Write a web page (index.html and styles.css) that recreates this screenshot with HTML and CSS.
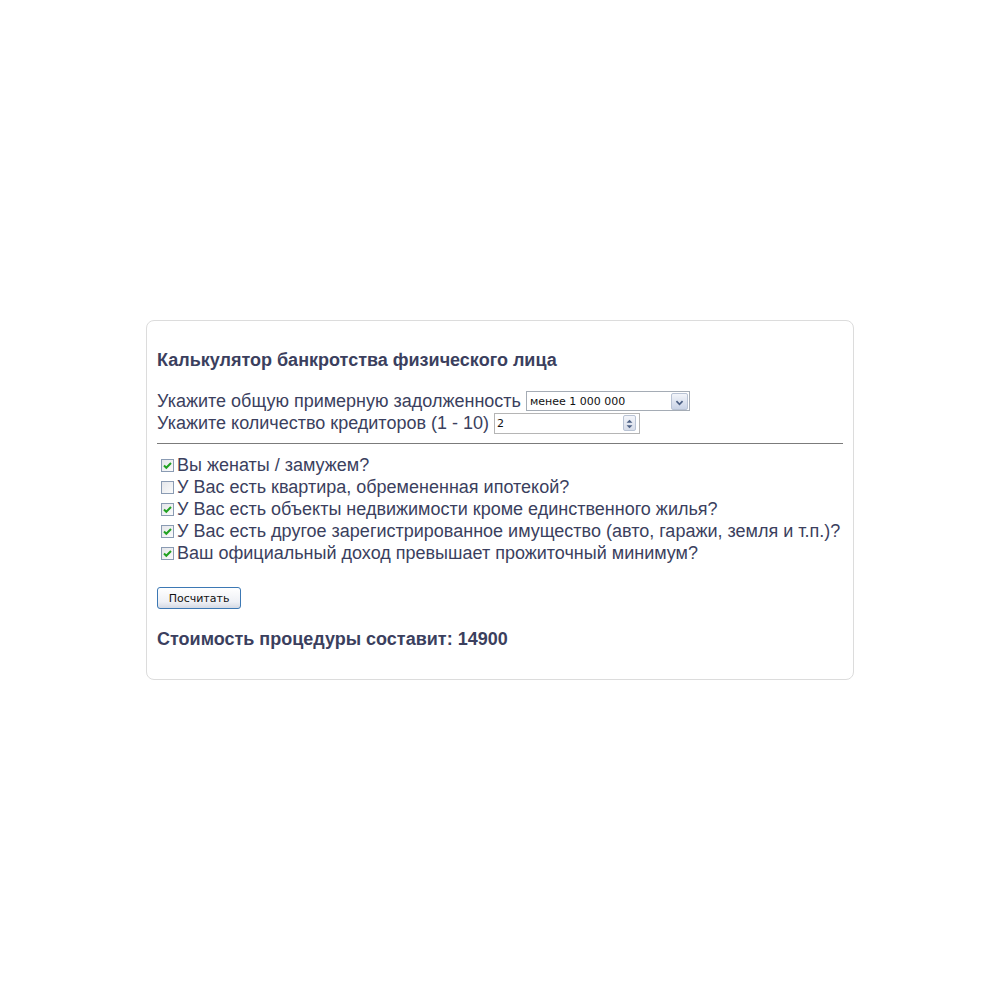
FILE: index.html
```html
<!DOCTYPE html>
<html lang="ru">
<head>
<meta charset="utf-8">
<title>Калькулятор банкротства</title>
<link rel="stylesheet" href="styles.css">
</head>
<body>
<div class="calc">
  <h2 class="calc-title">Калькулятор банкротства физического лица</h2>
  <div class="field">
    <label for="debt">Укажите общую примерную задолженность</label>
    <span class="select-box">
      <select id="debt" class="select">
        <option>менее 1 000 000</option>
        <option>от 1 000 000 до 3 000 000</option>
        <option>более 3 000 000</option>
      </select>
      <span class="select-btn">
        <svg width="17" height="17" viewBox="0 0 17 17">
          <path d="M5 7l3.5 3.5L12 7" fill="none" stroke="#4d6185" stroke-width="2"/>
        </svg>
      </span>
    </span>
  </div>
  <div class="field">
    <label for="creditors">Укажите количество кредиторов (1 - 10)</label>
    <span class="number-box">
      <input id="creditors" class="number" type="text" value="2">
      <span class="spin">
        <svg width="13" height="16" viewBox="0 0 13 16">
          <path d="M3 6.5l3.5-3.5L10 6.5z" fill="#4d6185"/>
          <path d="M3 9.5l3.5 3.5L10 9.5z" fill="#4d6185"/>
        </svg>
      </span>
    </span>
  </div>
  <hr class="rule">
  <div class="checks">
    <label class="check"><input type="checkbox" checked>Вы женаты / замужем?</label>
    <label class="check"><input type="checkbox">У Вас есть квартира, обремененная ипотекой?</label>
    <label class="check"><input type="checkbox" checked>У Вас есть объекты недвижимости кроме единственного жилья?</label>
    <label class="check"><input type="checkbox" checked>У Вас есть другое зарегистрированное имущество (авто, гаражи, земля и т.п.)?</label>
    <label class="check"><input type="checkbox" checked>Ваш официальный доход превышает прожиточный минимум?</label>
  </div>
  <button class="btn" type="button">Посчитать</button>
  <p class="result">Стоимость процедуры составит: 14900</p>
</div>
</body>
</html>
```

FILE: styles.css
```css
html, body {
  margin: 0;
  background: #fff;
}

body {
  min-height: 100vh;
  display: flex;
  align-items: center;
  justify-content: center;
  font-family: "Liberation Sans", Arial, sans-serif;
  font-size: 18px;
  color: #3b3f5e;
}

.calc {
  width: 686px;
  height: 318px;
  padding: 29px 10px 11px;
  border: 1px solid #dcdcdc;
  border-radius: 8px;
}

.calc-title {
  margin: 0 0 20px;
  font-size: 18px;
  line-height: 20px;
  font-weight: bold;
}

.field {
  display: flex;
  align-items: center;
  height: 22px;
  line-height: 22px;
}

.field label {
  margin-right: 5px;
}

.select-box {
  display: flex;
  align-items: center;
  width: 162px;
  height: 18px;
  border: 1px solid #a5acb5;
  background: #fff;
}

.select {
  flex: 1;
  min-width: 0;
  height: 18px;
  padding: 0 0 0 3px;
  border: 0;
  outline: 0;
  background: transparent;
  appearance: none;
  -webkit-appearance: none;
  font-family: "DejaVu Sans", Verdana, sans-serif;
  font-size: 11px;
  color: #111;
}

.select-btn {
  display: flex;
  width: 17px;
  height: 17px;
  margin-right: 1px;
  background: linear-gradient(#f3f5fa, #c9d3e6);
  border: 1px solid #b9c3d4;
  box-sizing: border-box;
  border-radius: 2px;
}

.number-box {
  display: flex;
  align-items: center;
  width: 144px;
  height: 19px;
  border: 1px solid #b5b5b5;
  background: #fff;
}

.number {
  flex: 1;
  min-width: 0;
  height: 19px;
  padding: 0 0 0 2px;
  border: 0;
  outline: 0;
  font-family: "DejaVu Sans", Verdana, sans-serif;
  font-size: 11px;
  color: #111;
}

.spin {
  display: flex;
  width: 13px;
  height: 16px;
  margin-right: 3px;
  border: 1px solid #b9c3d4;
  box-sizing: border-box;
  border-radius: 2px;
  background: linear-gradient(#f3f5fa, #d6dce9);
}

.rule {
  height: 0;
  margin: 9px 0 10px;
  border: 0;
  border-top: 1px solid #7b7b7b;
}

.checks {
  display: flex;
  flex-direction: column;
}

.check {
  display: flex;
  align-items: center;
  height: 22px;
  line-height: 22px;
}

.check input {
  appearance: none;
  -webkit-appearance: none;
  width: 13px;
  height: 13px;
  margin: 0 3px 0 4px;
  border: 1px solid #8a9bb3;
  background: linear-gradient(135deg, #e4e6ea, #fbfbfb);
}

.check input:checked {
  background: url("data:image/svg+xml,%3Csvg xmlns='http://www.w3.org/2000/svg' width='11' height='11'%3E%3Cpath d='M2 5.5l2.3 2.3L9 3' fill='none' stroke='%2321a121' stroke-width='2'/%3E%3C/svg%3E") center no-repeat, linear-gradient(135deg, #e4e6ea, #fbfbfb);
}

.btn {
  display: block;
  width: 84px;
  height: 22px;
  margin: 23px 0 19px;
  padding: 0;
  border: 1px solid #3c78b4;
  border-radius: 3px;
  background: linear-gradient(#ffffff, #eef0f5 70%, #d4d9e3);
  font-family: "DejaVu Sans", Verdana, sans-serif;
  font-size: 11px;
  color: #111;
}

.result {
  margin: 0;
  font-size: 18px;
  line-height: 22px;
  font-weight: bold;
}
```
